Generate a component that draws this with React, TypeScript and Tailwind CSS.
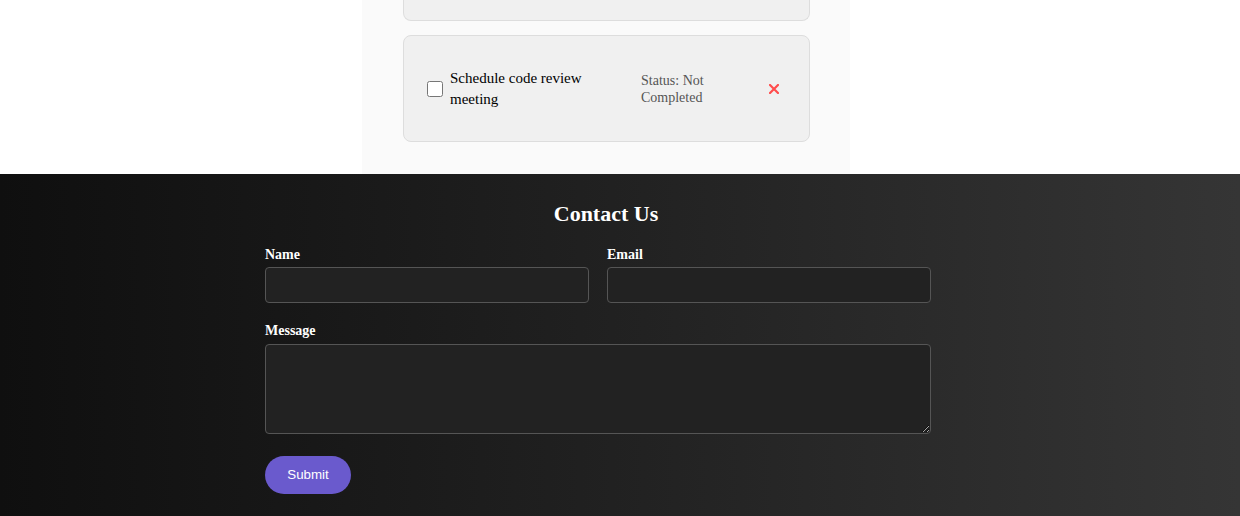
import { useState } from 'react';

const serif = 'font-["Liberation_Serif","Times_New_Roman",serif]';

function DeleteIcon() {
  return (
    <svg width="10" height="10" viewBox="0 0 10 10" aria-hidden="true">
      <path d="M1 1 L9 9 M9 1 L1 9" stroke="#ff4d4d" strokeWidth="2.2" strokeLinecap="square" />
    </svg>
  );
}

function TaskCard({ title, done }: { title: string; done: boolean }) {
  const [checked, setChecked] = useState(done);
  return (
    <div className="flex h-[107px] items-center rounded-lg border border-[#dddddd] bg-[#f0f0f0] px-5">
      <input
        type="checkbox"
        checked={checked}
        onChange={() => setChecked(!checked)}
        className="ml-[3px] h-4 w-4 shrink-0"
      />
      <span className="ml-[7px] mr-[10px] flex-1 text-[15px] leading-[21px] text-black">{title}</span>
      <span className="mr-[18px] w-[100px] text-[14px] leading-[17px] text-[#555555]">
        Status: {checked ? 'Completed' : 'Not Completed'}
      </span>
      <button className="flex w-[30px] items-center justify-center">
        <DeleteIcon />
      </button>
    </div>
  );
}

function Field({ label, className }: { label: string; className?: string }) {
  return (
    <div className={className}>
      <label className="block text-[14px] font-bold leading-4 text-white">{label}</label>
      <input
        type="text"
        className="mt-[4px] block h-9 w-full rounded border border-[#555555] bg-[#222222] px-2 text-white outline-none"
      />
    </div>
  );
}

export default function App() {
  return (
    <div className={`min-h-screen bg-white ${serif}`}>
      <div className="ml-[362px] w-[488px] bg-[#fafafa] pb-8 pl-[41px] pr-[40px]">
        <div className="h-[21px] rounded-b-lg border-x border-b border-[#dddddd] bg-[#f0f0f0]" />
        <div className="mt-[14px]">
          <TaskCard title="Schedule code review meeting" done={false} />
        </div>
      </div>

      <footer className="bg-gradient-to-r from-[#0f0f0f] to-[#353535] pb-10 pt-[27px]">
        <h2 className="ml-[362px] w-[488px] text-center text-[22px] font-bold leading-[25px] text-white">Contact Us</h2>
        <form className="ml-[265px] mt-[21px] w-[666px]" onSubmit={(e) => e.preventDefault()}>
          <div className="flex gap-[18px]">
            <Field label="Name" className="flex-1" />
            <Field label="Email" className="flex-1" />
          </div>
          <div className="mt-[20px]">
            <label className="block text-[14px] font-bold leading-4 text-white">Message</label>
            <textarea className="mt-[5px] block h-[90px] w-full rounded border border-[#555555] bg-[#222222] p-2 text-white outline-none" />
          </div>
          <button
            type="submit"
            className="mt-[22px] h-[38px] w-[86px] rounded-full bg-[#6a5acd] font-['Liberation_Sans',Arial,sans-serif] text-[13.33px] text-white"
          >
            Submit
          </button>
        </form>
      </footer>
    </div>
  );
}
